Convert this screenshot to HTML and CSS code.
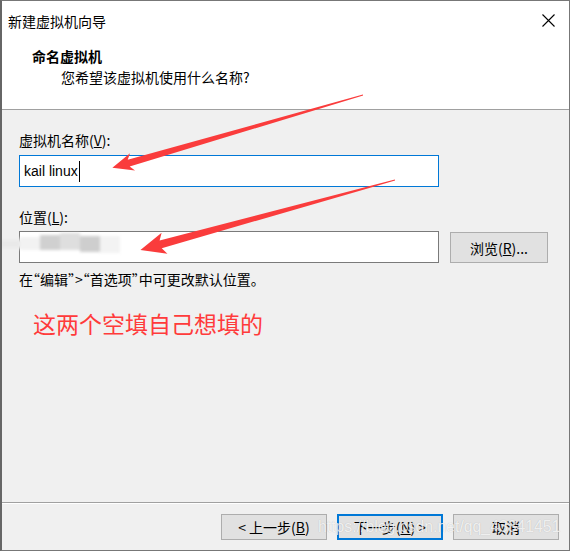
FILE: index.html
```html
<!DOCTYPE html>
<html lang="zh-CN">
<head>
    <meta charset="UTF-8">
    <title>新建虚拟机向导</title>
    <link rel="stylesheet" href="styles.css">
</head>
<body>
    <div class="window">
        <!-- 标题栏 -->
        <div class="titlebar">
            <span class="title">新建虚拟机向导</span>
            <svg class="close" width="13" height="13" viewBox="0 0 13 13">
                <path d="M0.5 0.5 L12.5 12.5 M12.5 0.5 L0.5 12.5" stroke="#000" stroke-width="1.1" fill="none"/>
            </svg>
        </div>

        <!-- 步骤说明 -->
        <div class="header">
            <h1>命名虚拟机</h1>
            <p>您希望该虚拟机使用什么名称?</p>
        </div>

        <!-- 表单 -->
        <div class="content">
            <label class="field-label">虚拟机名称(<u>V</u>):</label>
            <div class="input active">kail linux<span class="caret"></span></div>

            <label class="field-label second">位置(<u>L</u>):</label>
            <div class="location-row">
                <div class="input"></div>
                <button class="btn browse">浏览(<u>R</u>)...</button>
            </div>

            <p class="hint">在“编辑”&gt;“首选项”中可更改默认位置。</p>
            <p class="note">这两个空填自己想填的</p>
        </div>

        <!-- 底部按钮 -->
        <div class="footer">
            <button class="btn">&lt; 上一步(<u>B</u>)</button>
            <button class="btn primary">下一步(<u>N</u>) &gt;</button>
            <button class="btn">取消</button>
        </div>

        <!-- 打码的路径 -->
        <div class="smudge">
            <span style="left:0;top:8px;width:20px;height:8px;background:#e9e9e9"></span>
            <span style="left:20px;top:5px;width:20px;height:13px;background:#f2f2f2"></span>
            <span style="left:40px;top:3px;width:20px;height:15px;background:#d0d0d0"></span>
            <span style="left:60px;top:1px;width:20px;height:17px;background:#dedede"></span>
            <span style="left:80px;top:4px;width:20px;height:16px;background:#cecece"></span>
            <span style="left:100px;top:4px;width:20px;height:17px;background:#f3f3f3"></span>
        </div>

        <div class="watermark">https://blog.csdn.net/qq_43341451</div>

        <!-- 标注箭头 -->
        <svg class="arrows" width="570" height="551" viewBox="0 0 570 551">
            <polygon transform="translate(363 95) rotate(163.8)"
                     points="0,-0.5 244,-3.5 240,-9 261,0 240,9 244,3.5 0,0.5"/>
            <polygon transform="translate(395 180) rotate(164.65)"
                     points="0,-0.5 243,-4 239,-11 264,0 239,11 243,4 0,0.5"/>
        </svg>
    </div>
</body>
</html>
```

FILE: styles.css
```css
/* 기본 */
body {
    margin: 0;
    background: #fff;
    font-family: "Noto Sans CJK SC", "Noto Sans", sans-serif;
    font-size: 14px;
    color: #000;
}

.window {
    position: relative;
    width: 570px;
    height: 551px;
    box-sizing: border-box;
    border: 1px solid #777;
    border-left: 2px solid #666;
    display: flex;
    flex-direction: column;
    background: #f0f0f0;
    overflow: hidden;
}

/* 标题栏 */
.titlebar {
    height: 39px;
    flex-shrink: 0;
    background: #fff;
    display: flex;
    align-items: center;
    justify-content: space-between;
    padding: 0 14px 0 6px;
}

.close {
    display: block;
}

/* 头部 */
.header {
    height: 70px;
    flex-shrink: 0;
    box-sizing: border-box;
    background: #fff;
    border-bottom: 1px solid #a0a0a0;
    padding: 6px 0 0 30px;
}

.header h1 {
    margin: 0;
    font-size: 14px;
    font-weight: bold;
    line-height: 20px;
}

.header p {
    margin: 1px 0 0 29px;
    line-height: 20px;
}

/* 内容 */
.content {
    flex: 1;
    padding: 20px 0 0 17px;
}

.field-label {
    display: block;
    line-height: 20px;
}

.field-label.second {
    margin-top: 20px;
}

.input {
    width: 420px;
    height: 32px;
    box-sizing: border-box;
    border: 1px solid #7a7a7a;
    background: #fff;
    margin-top: 5px;
    padding-left: 4px;
    display: flex;
    align-items: center;
    font-family: "Liberation Sans", Arial, sans-serif;
    font-size: 14px;
}

.input.active {
    border-color: #0078d7;
}

.caret {
    display: inline-block;
    width: 1px;
    height: 21px;
    margin-left: 1px;
    background: #000;
}

.location-row {
    display: flex;
    gap: 11px;
    margin-top: 4px;
}

.location-row .input {
    margin-top: 0;
}

.btn {
    font: inherit;
    color: #000;
    background: #e1e1e1;
    border: 1px solid #adadad;
    padding: 0;
    height: 26px;
    width: 106px;
    box-sizing: border-box;
}

.btn.browse {
    width: 98px;
    height: 31px;
    margin-top: 1px;
}

.btn.primary {
    border: 2px solid #0078d7;
}

.hint {
    margin: 6px 0 0;
    line-height: 20px;
    font-feature-settings: "halt";
}

.note {
    margin: 19px 0 0 14px;
    font-size: 23px;
    line-height: 30px;
    color: #ff3b3b;
}

/* 底部 */
.footer {
    height: 48px;
    flex-shrink: 0;
    box-sizing: border-box;
    border-top: 1px solid #a0a0a0;
    box-shadow: inset 0 1px #fff;
    display: flex;
    justify-content: flex-end;
    align-items: flex-start;
    gap: 10px;
    padding: 11px 10px 0 0;
}

/* 覆盖层 */
.smudge {
    position: absolute;
    left: -2px;
    top: 231px;
    width: 122px;
    height: 24px;
    filter: blur(1.5px);
}

.smudge span {
    position: absolute;
}

.watermark {
    position: absolute;
    left: 316px;
    top: 515px;
    font-family: "Liberation Sans", Arial, sans-serif;
    font-size: 15.8px;
    line-height: 22px;
    color: rgba(255, 255, 255, 0.8);
    text-shadow: 0 0 1px rgba(0, 0, 0, 0.22);
    white-space: nowrap;
}

.arrows {
    position: absolute;
    left: -2px;
    top: -1px;
    pointer-events: none;
}

.arrows polygon {
    fill: #fa3c3c;
}
```
